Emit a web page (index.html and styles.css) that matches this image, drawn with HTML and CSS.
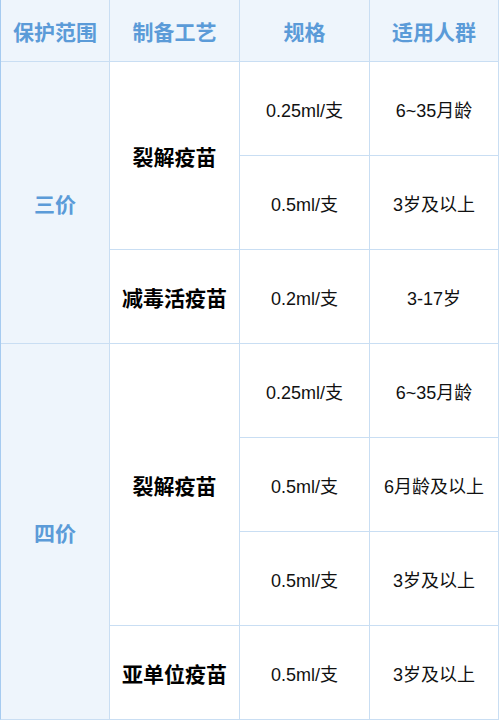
FILE: index.html
```html
<!DOCTYPE html>
<html lang="zh-CN">
<head>
<meta charset="utf-8">
<title>流感疫苗</title>
<link rel="stylesheet" href="styles.css">
</head>
<body>
<div class="grid">
  <div class="cell head">保护范围</div>
  <div class="cell head">制备工艺</div>
  <div class="cell head">规格</div>
  <div class="cell head">适用人群</div>

  <div class="cell scope r3">三价</div>
  <div class="cell kind r2">裂解疫苗</div>
  <div class="cell val">0.25ml/支</div>
  <div class="cell val">6~35月龄</div>
  <div class="cell val">0.5ml/支</div>
  <div class="cell val">3岁及以上</div>
  <div class="cell kind">减毒活疫苗</div>
  <div class="cell val">0.2ml/支</div>
  <div class="cell val">3-17岁</div>

  <div class="cell scope r4">四价</div>
  <div class="cell kind r3">裂解疫苗</div>
  <div class="cell val">0.25ml/支</div>
  <div class="cell val">6~35月龄</div>
  <div class="cell val">0.5ml/支</div>
  <div class="cell val">6月龄及以上</div>
  <div class="cell val">0.5ml/支</div>
  <div class="cell val">3岁及以上</div>
  <div class="cell kind">亚单位疫苗</div>
  <div class="cell val">0.5ml/支</div>
  <div class="cell val">3岁及以上</div>
</div>
</body>
</html>
```
FILE: styles.css
```css
html, body {
  margin: 0;
  padding: 0;
  background: #ffffff;
}
.grid {
  display: grid;
  grid-template-columns: 108px 129px 129px 128px;
  grid-template-rows: 61px repeat(7, 93px);
  gap: 1px;
  width: 497px;
  background: #c9def3;
  border-left: 1px solid #a6cbf0;
  border-right: 1px solid #c9def3;
  border-bottom: 1px solid #c9def3;
  font-family: "Liberation Sans", "Noto Sans CJK SC", sans-serif;
}
.cell {
  display: flex;
  align-items: center;
  justify-content: center;
  background: #ffffff;
  text-align: center;
}
.head {
  background: #eef5fc;
  color: #5b9bd8;
  font-weight: bold;
  font-size: 21px;
}
.scope {
  background: #eef5fc;
  color: #5b9bd8;
  font-weight: bold;
  font-size: 21px;
}
.kind {
  color: #000000;
  font-weight: bold;
  font-size: 21px;
}
.val {
  color: #111111;
  font-size: 18px;
}
.r2 { grid-row: span 2; }
.r3 { grid-row: span 3; }
.r4 { grid-row: span 4; }
```
